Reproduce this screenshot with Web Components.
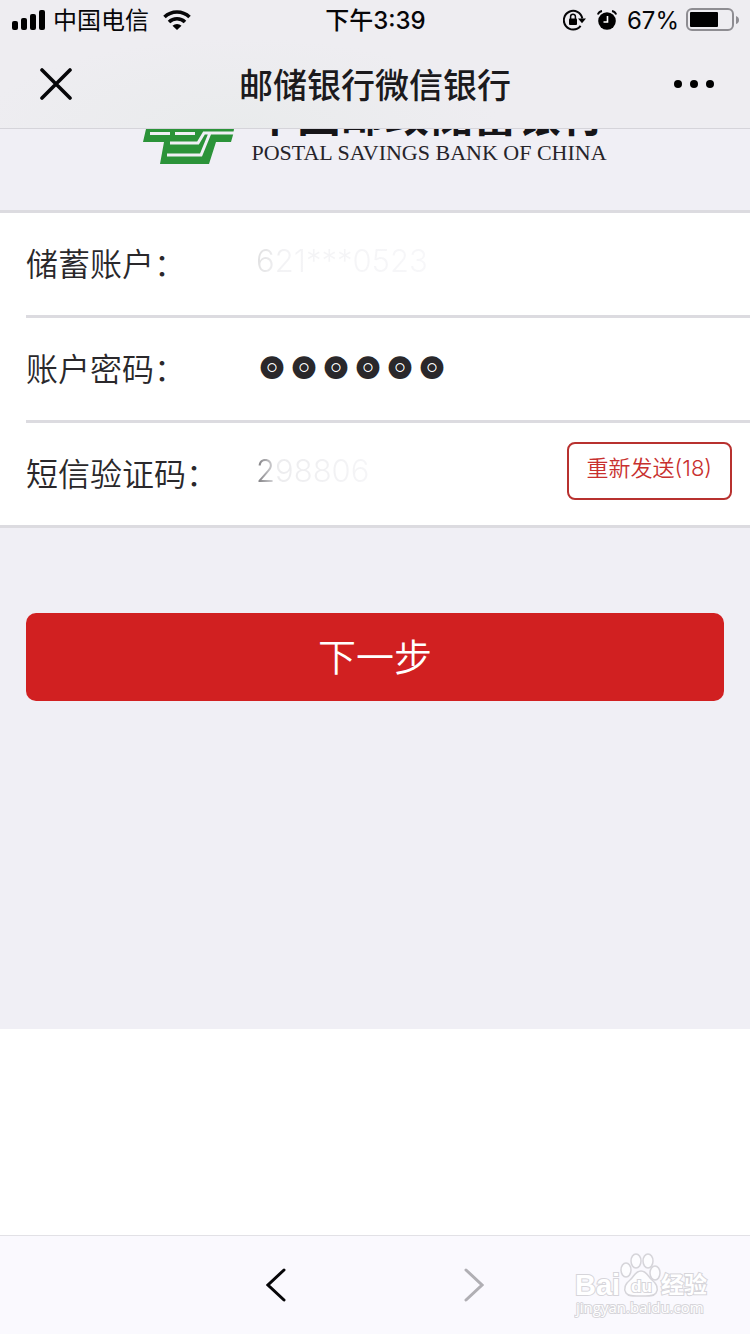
<!DOCTYPE html>
<html lang="zh-CN">
<head>
<meta charset="utf-8">
<meta name="viewport" content="width=device-width, initial-scale=1">
<title>邮储银行微信银行</title>
<style>
  :root {
    --color-page: #f0eff5;
    --color-header: #eeedf1;
    --color-line: #dcdbe0;
    --color-text: #2a282b;
    --color-brand: #d12021;
    --color-brand-dark: #b8312f;
    --color-logo: #2b9339;
    --space-page: 26px;
    --font-family: Inter, "Noto Sans CJK SC", sans-serif;
  }

  body {
    margin: 0;
    min-height: 100vh;
    display: flex;
    flex-direction: column;
    background: #fff;
    color: var(--color-text);
    font-family: var(--font-family);
  }
</style>
</head>
<body>
<wx-page>
  <wx-status-bar slot="header" carrier="中国电信" time="下午3:39" battery="67%"></wx-status-bar>
  <wx-nav-bar slot="header">邮储银行微信银行</wx-nav-bar>

  <bank-logo></bank-logo>
  <bank-form>
    <bank-field label="储蓄账户：" value="621***0523" fade="top"></bank-field>
    <bank-field label="账户密码：" value="298806" type="password"></bank-field>
    <bank-field label="短信验证码：" value="298806" fade="left">
      <bank-button slot="action" kind="outline">重新发送(18)</bank-button>
    </bank-field>
  </bank-form>
  <bank-button kind="primary">下一步</bank-button>

  <wx-tool-bar slot="footer"><baidu-mark></baidu-mark></wx-tool-bar>
</wx-page>

<script>
class BaseElement extends HTMLElement {
  constructor() {
    super()
    this._shadowRoot = this.attachShadow({ mode: 'open' })
  }

  connectedCallback() {
    this._shadowRoot.innerHTML = this.render()
  }

  attr(name) {
    return this.getAttribute(name) || ''
  }
}

class WxPage extends BaseElement {
  render() {
    return `
<style>
  :host { flex: 1; display: flex; flex-direction: column; }
  header {
    background: radial-gradient(ellipse 260px 90px at 32% 100%, #e9ebec, transparent), var(--color-header);
    border-bottom: 1px solid #d5d4da;
  }
  main { flex: 1; background: var(--color-page); }
  .rest { height: 206px; background: #fff; }
</style>
<header><slot name="header"></slot></header>
<main><slot></slot></main>
<div class="rest"></div>
<slot name="footer"></slot>`
  }
}

class WxStatusBar extends BaseElement {
  render() {
    return `
<style>
  :host {
    display: grid;
    grid-template-columns: 1fr auto 1fr;
    align-items: center;
    height: 40px;
    padding: 0 11px 0 12px;
    color: #060608;
    font-size: 24px;
    line-height: 32px;
  }
  div { display: flex; align-items: center; }
  svg { display: block; flex: none; }
  span { padding-top: 2px; }
  .left { gap: 8px; }
  .wifi { margin-left: 6px; }
  .time { font-weight: 500; }
  .right { justify-content: flex-end; gap: 10px; }
  .power { gap: 7px; }
</style>
<div class="left">
  <svg width="33" height="20" viewBox="0 0 33 20">
    <rect x="0" y="11" width="6" height="9" rx="2"/>
    <rect x="9" y="8" width="6" height="12" rx="2"/>
    <rect x="18" y="4" width="6" height="16" rx="2"/>
    <rect x="27" y="0" width="6" height="20" rx="2"/>
  </svg>
  <span>${this.attr('carrier')}</span>
  <svg class="wifi" width="28" height="20" viewBox="0 0 28 20">
    <path d="M1.500 7a18 18 0 0 1 25 0M6 12a11.500 11.500 0 0 1 16 0" fill="none" stroke="currentColor" stroke-width="3.600"/>
    <path d="M14 20l-4.500-4.200a6.500 6.500 0 0 1 9 0z"/>
  </svg>
</div>
<div class="time"><span>${this.attr('time')}</span></div>
<div class="right">
  <svg width="24" height="22" viewBox="0 0 24 22">
    <path d="M17.600 16.800A9.300 9.300 0 1 1 19.300 9.500" fill="none" stroke="currentColor" stroke-width="2"/>
    <path d="M15 9.500h8l-4 4.800z"/>
    <rect x="6" y="9.500" width="8" height="6.500" rx="1"/>
    <path d="M7.600 10V7.600a2.400 2.400 0 0 1 4.800 0V10" fill="none" stroke="currentColor" stroke-width="1.500"/>
  </svg>
  <svg width="20" height="20" viewBox="0 0 20 20">
    <circle cx="10" cy="11" r="8.800"/>
    <path d="M.8 4.500Q2 1.500 5 1M19.200 4.500Q18 1.500 15 1" fill="none" stroke="currentColor" stroke-width="1.800"/>
    <path d="M10.500 6v6H6.500" fill="none" stroke="#fff" stroke-width="1.600"/>
  </svg>
  <div class="power">
    <span>${this.attr('battery')}</span>
    <svg width="53" height="24" viewBox="0 0 53 24">
      <rect x="1" y="1" width="46" height="21" rx="5" fill="none" stroke="#8e8d92" stroke-width="2"/>
      <rect x="4" y="4" width="28" height="15" rx="1"/>
      <path d="M50 8q3 1 3 4t-3 4z" fill="#8e8d92"/>
    </svg>
  </div>
</div>`
  }
}

class WxNavBar extends BaseElement {
  render() {
    return `
<style>
  :host {
    display: grid;
    grid-template-columns: 1fr auto 1fr;
    align-items: center;
    height: 88px;
    padding: 0 32px;
  }
  h1 { margin: 0; padding-top: 4px; color: #1b1a1d; font-size: 34px; font-weight: 500; line-height: 48px; }
  button { padding: 4px; border: 0; background: none; color: #060608; }
  button:last-child { justify-self: end; }
  .close { justify-self: start; padding: 8px; }
  svg { display: block; }
</style>
<button class="close" type="button" aria-label="关闭">
  <svg width="32" height="32" viewBox="0 0 32 32">
    <path d="M2 2l28 28M30 2L2 30" fill="none" stroke="currentColor" stroke-width="3.600" stroke-linecap="round"/>
  </svg>
</button>
<h1><slot></slot></h1>
<button type="button" aria-label="更多">
  <svg width="40" height="8" viewBox="0 0 40 8">
    <circle cx="4" cy="4" r="4"/><circle cx="20" cy="4" r="4"/><circle cx="36" cy="4" r="4"/>
  </svg>
</button>`
  }
}

class BankLogo extends BaseElement {
  render() {
    return `
<style>
  :host {
    display: flex;
    justify-content: center;
    align-items: flex-start;
    gap: 16px;
    height: 81px;
    overflow: hidden;
  }
  svg { display: block; flex: none; }
  .names { display: flex; flex-direction: column; align-items: center; }
  /* scrolled half way under the header */
  .zh {
    display: flex;
    align-items: flex-end;
    height: 12px;
    overflow: hidden;
    font: 700 44px/56px "Noto Sans CJK SC", sans-serif;
    color: #161518;
  }
  .en { font: 22px/24px "Liberation Serif", serif; color: #26242a; white-space: nowrap; }
</style>
<svg width="92" height="36" viewBox="0 0 92 36">
  <path d="M3 0H91L90 6L88 13H73L66 35H17L21 13H0z" fill="var(--color-logo)"/>
  <path d="M7 4.500H27M32 4.500H52M27 14H55L61 4H92M24 26H58L67 4" fill="none" stroke="#f0eff5" stroke-width="3"/>
</svg>
<div class="names">
  <div class="zh">中国邮政储蓄银行</div>
  <div class="en">POSTAL SAVINGS BANK OF CHINA</div>
</div>`
  }
}

class BankForm extends BaseElement {
  render() {
    return `
<style>
  :host { display: block; }
  form {
    padding-left: var(--space-page);
    border: solid var(--color-line);
    border-width: 3px 0;
    background: #fff;
  }
  ::slotted(bank-field:not(:first-child)) { border-top: 3px solid var(--color-line); }
</style>
<form><slot></slot></form>`
  }
}

class BankField extends BaseElement {
  render() {
    return `
<style>
  :host {
    display: flex;
    align-items: center;
    height: 96px;
    padding: 0 18px 6px 0;
  }
  label { flex: none; width: 230px; padding-top: 8px; font-size: 32px; font-weight: 350; line-height: 48px; }
  input {
    flex: 1;
    min-width: 0;
    padding: 0;
    border: 0;
    outline: 0;
    background: none;
    color: var(--color-text);
    font: 300 31px/40px var(--font-family);
  }
  /* the stroke turns the small bullets into full discs */
  input[type=password] {
    font: 32px/40px "Noto Sans CJK SC", sans-serif;
    -webkit-text-stroke: 16px var(--color-text);
  }
  .top, .left { -webkit-background-clip: text; background-clip: text; -webkit-text-fill-color: transparent; }
  .top { background-image: linear-gradient(100deg, #dededf, #f3f3f5 30px, #f7f7f9 180px); }
  .left { background-image: linear-gradient(90deg, #77767a, #ececee 22px, #f6f6f8 120px); }
</style>
<label for="field">${this.attr('label')}</label>
<input id="field" type="${this.attr('type') || 'text'}" class="${this.attr('fade')}" value="${this.attr('value')}">
<slot name="action"></slot>`
  }
}

class BankButton extends BaseElement {
  render() {
    return `
<style>
  :host { display: block; }
  :host([kind=primary]) { padding: 85px var(--space-page) 0; }
  button { display: block; font-family: var(--font-family); font-weight: 350; }
  .primary {
    width: 100%;
    height: 88px;
    padding: 0 0 6px;
    border: 0;
    border-radius: 10px;
    background: var(--color-brand);
    color: #fff;
    font-size: 38px;
  }
  .outline {
    height: 58px;
    padding: 0 18px 10px;
    border: 2px solid var(--color-brand-dark);
    border-radius: 8px;
    background: #fff;
    color: #c8302e;
    font-size: 22px;
    white-space: nowrap;
  }
</style>
<button type="button" class="${this.attr('kind')}"><slot></slot></button>`
  }
}

class WxToolBar extends BaseElement {
  render() {
    return `
<style>
  :host {
    position: relative;
    display: flex;
    justify-content: center;
    align-items: center;
    gap: 170px;
    height: 98px;
    border-top: 1px solid #e2e1e6;
    background: #faf9fe;
  }
  button { padding: 4px; border: 0; background: none; color: #060608; }
  button:disabled { color: #b0afb4; }
  svg { display: block; }
  ::slotted(baidu-mark) { position: absolute; right: 40px; top: 16px; }
</style>
<button type="button" aria-label="后退">
  <svg width="20" height="34" viewBox="0 0 20 34">
    <path d="M18 2L2 17l16 15" fill="none" stroke="currentColor" stroke-width="3" stroke-linecap="round"/>
  </svg>
</button>
<button type="button" aria-label="前进" disabled>
  <svg width="20" height="34" viewBox="0 0 20 34">
    <path d="M2 2l16 15L2 32" fill="none" stroke="currentColor" stroke-width="3" stroke-linecap="round"/>
  </svg>
</button>
<slot></slot>`
  }
}

class BaiduMark extends BaseElement {
  render() {
    return `
<style>
  :host { display: block; }
  svg { display: block; }
  text { fill: #fff; stroke: #d6d5da; stroke-width: 2px; paint-order: stroke; }
</style>
<svg width="136" height="68" viewBox="0 0 136 68">
  <g fill="#fdfdff" stroke="#d6d5da" stroke-width="1.500">
    <ellipse cx="52" cy="18" rx="5" ry="7"/>
    <ellipse cx="62" cy="9" rx="5" ry="7"/>
    <ellipse cx="74" cy="9" rx="5" ry="7"/>
    <ellipse cx="81" cy="21" rx="5" ry="7"/>
    <path d="M67 19c-6 0-7 6-11 9-5 4-7 8-4 13 3 4 9 3 15 3s12 1 15-3c3-5 1-9-4-13-4-3-5-9-11-9z"/>
  </g>
  <text x="1" y="43" font-family="Liberation Sans" font-weight="700" font-size="29">Bai</text>
  <text x="57" y="40" font-family="Liberation Sans" font-weight="700" font-size="17">du</text>
  <text x="87" y="41" font-family="Noto Sans CJK SC" font-weight="700" font-size="23">经验</text>
  <text x="2" y="61" font-family="Open Sans" font-size="15">jingyan.baidu.com</text>
</svg>`
  }
}

customElements.define('wx-page', WxPage)
customElements.define('wx-status-bar', WxStatusBar)
customElements.define('wx-nav-bar', WxNavBar)
customElements.define('bank-logo', BankLogo)
customElements.define('bank-form', BankForm)
customElements.define('bank-field', BankField)
customElements.define('bank-button', BankButton)
customElements.define('wx-tool-bar', WxToolBar)
customElements.define('baidu-mark', BaiduMark)
</script>
</body>
</html>
